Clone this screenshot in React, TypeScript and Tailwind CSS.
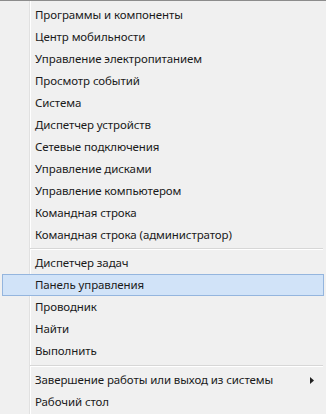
import React from "react";

const group1 = [
  "Программы и компоненты",
  "Центр мобильности",
  "Управление электропитанием",
  "Просмотр событий",
  "Система",
  "Диспетчер устройств",
  "Сетевые подключения",
  "Управление дисками",
  "Управление компьютером",
  "Командная строка",
  "Командная строка (администратор)",
];
const group2 = ["Диспетчер задач", "Панель управления", "Проводник", "Найти", "Выполнить"];

function Item({ label, active, arrow }: { label: string; active?: boolean; arrow?: boolean }) {
  return (
    <div className="h-[22px] px-[2px]">
      <div
        className={
          "relative h-[22px] flex items-center border " +
          (active ? "bg-[#d1e3f8] border-[#94b5de]" : "border-transparent")
        }
      >
        <span className="pl-[32px] text-[11.5px] tracking-[-0.1px] text-[#1a1a1a] leading-none whitespace-nowrap">
          {label}
        </span>
        {arrow && (
          <svg className="absolute right-[9px] top-[7px]" width="4" height="7" viewBox="0 0 4 7">
            <path d="M0 0 L4 3.5 L0 7 Z" fill="#222" />
          </svg>
        )}
      </div>
    </div>
  );
}

function Sep({ h }: { h: string }) {
  return (
    <div className={"flex items-center pl-[30px] pr-[3px] " + h}>
      <div className="w-full flex flex-col">
        <div className="h-px bg-[#d7d7d7]" />
        <div className="h-px bg-white" />
      </div>
    </div>
  );
}

export default function App() {
  return (
    <div
      className="relative w-[326px] h-[414px] bg-[#f0f0f0] overflow-hidden border-t border-[#8c8c8c]"
      style={{ fontFamily: '"Noto Sans", "Open Sans", Arial, sans-serif' }}
    >
      <div className="absolute left-[29px] top-0 bottom-0 w-px bg-[#e1e1e1]" />
      <div className="absolute left-[30px] top-0 bottom-0 w-px bg-white" />
      <div className="relative flex flex-col pt-[3px]">
        {group1.map((l) => (
          <Item key={l} label={l} />
        ))}
        <Sep h="h-[6px]" />
        {group2.map((l) => (
          <Item key={l} label={l} active={l === "Панель управления"} />
        ))}
        <Sep h="h-[7px]" />
        <Item label="Завершение работы или выход из системы" arrow />
        <Item label="Рабочий стол" />
      </div>
    </div>
  );
}
